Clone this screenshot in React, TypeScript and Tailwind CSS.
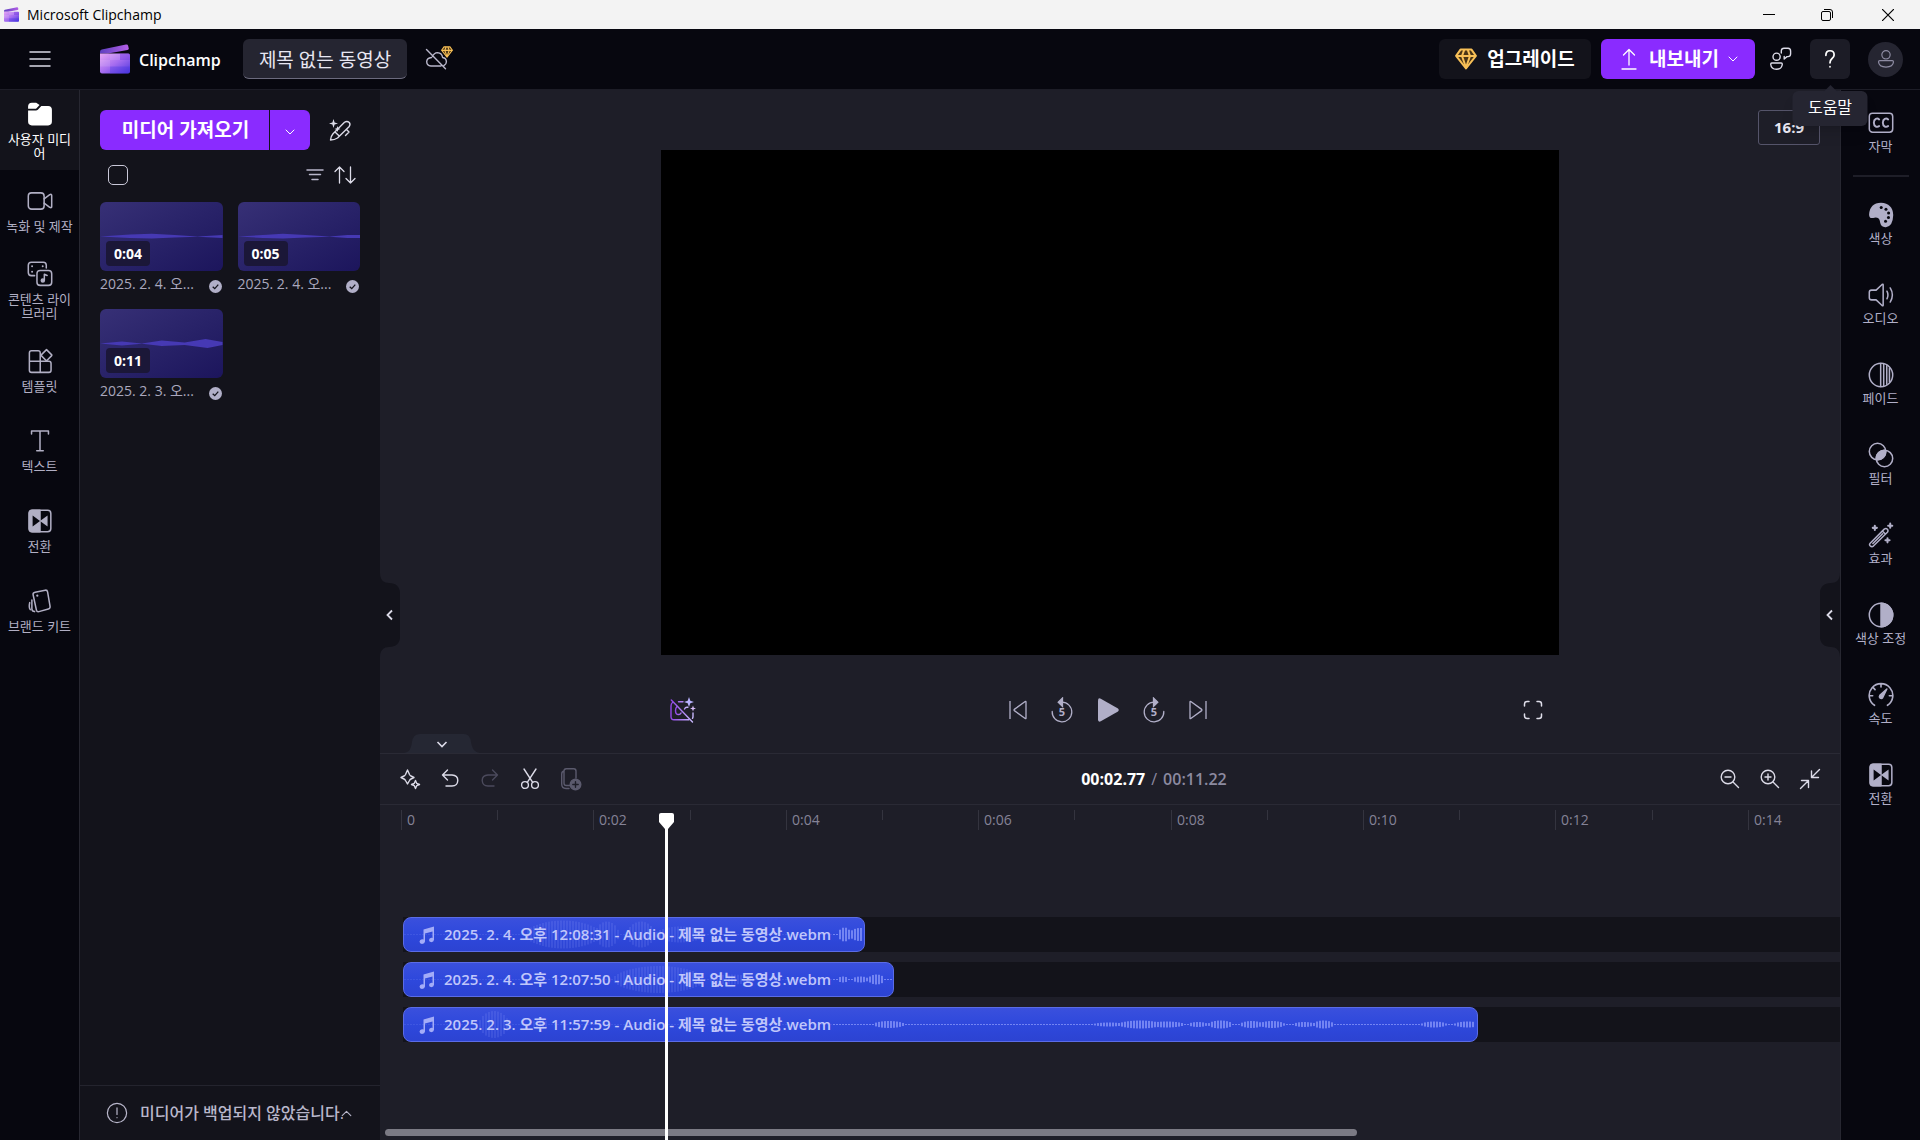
import type { ReactNode } from 'react';

type IconProps = { children: ReactNode; size?: number; className?: string; stroke?: number };

// Outline icon base, drawn on a 24 grid
function Icon({ children, size = 24, className = '', stroke = 1.4 }: IconProps) {
  return (
    <svg
      width={size}
      height={size}
      viewBox="0 0 24 24"
      fill="none"
      stroke="currentColor"
      strokeWidth={stroke}
      strokeLinecap="round"
      strokeLinejoin="round"
      aria-hidden="true"
      className={`shrink-0 ${className}`}
    >
      {children}
    </svg>
  );
}

function Logo({ size }: { size: number }) {
  return (
    <svg width={size} height={size} viewBox="0 0 30 30" aria-hidden="true" className="shrink-0">
      <defs>
        <linearGradient id={`lid${size}`} x1="0" y1="0" x2="1" y2="0">
          <stop offset="0" stopColor="#5d3fc0" />
          <stop offset="1" stopColor="#b45fe6" />
        </linearGradient>
        <linearGradient id={`body${size}`} x1="0" y1="0" x2="1" y2="1">
          <stop offset="0" stopColor="#e7a6f4" />
          <stop offset="0.5" stopColor="#a66df0" />
          <stop offset="1" stopColor="#4a35dd" />
        </linearGradient>
      </defs>
      <path d="M0 9.5V7.8Q0 6 1.8 5.5L26 0.6Q27.8 .3 28.2 2L28.7 4.2Q28.9 5.6 27.4 6L8 9.5Z" fill={`url(#lid${size})`} />
      <path d="M0 9.5H28.3Q30 9.5 30 11.2V27.5Q30 29.5 28 29.5H2Q0 29.5 0 27.5Z" fill={`url(#body${size})`} />
      <path d="M10 9.5H20V16H10Z" fill="#fff" opacity=".1" />
      <path d="M20 9.5H28.3Q30 9.5 30 11.2V16H20Z" fill="#6b35d8" opacity=".35" />
      <path d="M0 16H10V22.5H0Z" fill="#fff" opacity=".12" />
      <path d="M10 22.5H30V27.5Q30 29.5 28 29.5H10Z" fill="#4030e0" opacity=".3" />
    </svg>
  );
}

function Gem({ size }: { size: number }) {
  return (
    <svg
      width={size}
      height={size}
      viewBox="0 0 22 22"
      fill="none"
      stroke="#f8c057"
      strokeWidth="2"
      strokeLinejoin="round"
      aria-hidden="true"
      className="shrink-0"
    >
      <path d="M5.5 1.600H16.500L20.900 7.800L11 20.500L1.100 7.800Z" fill="#4a3516" />
      <path d="M1.500 8H20.500M9.200 1.800L7 8L11 19.500L15 8L12.800 1.800" />
    </svg>
  );
}

function Chevron({ d, size = 12, stroke = 2, className = '' }: { d: string; size?: number; stroke?: number; className?: string }) {
  return (
    <Icon size={size} stroke={stroke} className={className}>
      <path d={d} />
    </Icon>
  );
}

const DOWN = 'M4 8L12 16L20 8';
const UP = 'M4 16L12 8L20 16';

const icons = {
  folder: (
    <Icon size={26}>
      <path d="M1 5Q1 1.500 4.500 1.500H8.500L11.600 3.600L8.800 6.600Q8.300 7.200 7.500 7.200H1Z" fill="currentColor" stroke="none" />
      <path d="M1 8.700H8.300Q9.300 8.700 10 8L13.200 4.500H19.500Q23 4.500 23 8V19Q23 22.500 19.500 22.500H4.500Q1 22.500 1 19Z" fill="currentColor" stroke="none" />
    </Icon>
  ),
  camera: (
    <Icon size={26}>
      <rect x="1.200" y="4.500" width="14.600" height="15" rx="3" />
      <path d="M15.800 10L21 6.200Q22.800 5.200 22.800 7V17Q22.800 18.800 21 17.800L15.800 14" />
    </Icon>
  ),
  library: (
    <Icon size={26}>
      <path d="M7 13.500H4Q1.200 13.500 1.200 10.700V3.900Q1.200 1.200 4 1.200H15Q17.800 1.200 17.800 4V6.500" />
      <path d="M4.700 4.800V4.900M4.700 9.800V9.900M14.500 4.800V4.900" strokeWidth="1.800" />
      <rect x="9.200" y="8.700" width="13.600" height="13.800" rx="3" />
      <circle cx="14.600" cy="18" r="1.400" fill="currentColor" />
      <path d="M16 18V12.200L18.600 13.400" />
    </Icon>
  ),
  templates: (
    <Icon size={26}>
      <path d="M12.200 12.200V4.500Q12.200 2.500 10.200 2.500H4.200Q2.200 2.500 2.200 4.500V20.500Q2.200 22.500 4.200 22.500H20.200Q22.200 22.500 22.200 20.500V14.200Q22.200 12.200 20.200 12.200H2.200M12.200 12.200V22.500" />
      <path d="M18 1.500L22.600 6.100Q23.200 6.700 22.600 7.300L18.600 11.300Q18 11.900 17.400 11.300L13.400 7.300Q12.800 6.700 13.400 6.100Z" />
    </Icon>
  ),
  text: (
    <Icon size={26}>
      <path d="M4.200 5.500V2.700H19.800V5.500M12 2.700V21M9 21H15" />
    </Icon>
  ),
  transition: (
    <Icon size={26}>
      <rect x="2" y="2" width="20" height="20" rx="3" />
      <path d="M12 2V22H5Q2 22 2 19V5Q2 2 5 2Z" fill="currentColor" />
      <path d="M5.200 7V17L12 12Z" fill="#07070f" stroke="none" />
      <path d="M19 7V17L12 12Z" fill="currentColor" stroke="none" />
    </Icon>
  ),
  brand: (
    <Icon size={26}>
      <path d="M7.500 3.900L16.800 2Q18.600 1.700 19 3.500L21.300 17Q21.500 19 19.700 19.400L11 21.800Q9.200 22.200 8.700 20.500L5.600 6Q5.400 4.300 7.500 3.900Z" />
      <path d="M9.500 7V7.100" strokeWidth="2" />
      <path d="M4.500 11V19.500Q4.700 21.500 7 21.800M2.500 13.500Q1.500 18 3 20" />
    </Icon>
  ),
  cc: (
    <Icon size={26}>
      <rect x="1.200" y="3" width="21.600" height="17.500" rx="3" />
      <path d="M10.300 8.700Q8.900 7.500 7.200 8.200Q5.400 9.200 5.400 11.800Q5.400 14.400 7.200 15.300Q8.900 16 10.300 14.800M18.600 8.700Q17.200 7.500 15.500 8.200Q13.700 9.200 13.700 11.800Q13.700 14.400 15.500 15.300Q17.200 16 18.600 14.800" strokeWidth="1.800" />
    </Icon>
  ),
  palette: (
    <Icon size={26}>
      <path d="M1 11.500Q1.800 1 12 0.800Q22.800 1.500 23.300 12Q23 22.500 16.500 23.200Q12 23.500 11.200 19Q10.800 15 8.500 14.500Q6.500 14.200 4.800 14.700Q1 15.500 1 11.500Z" fill="currentColor" stroke="none" />
      <g fill="#07070f" stroke="none">
        <circle cx="12.200" cy="5" r="1.400" />
        <circle cx="16.600" cy="6.600" r="1.400" />
        <circle cx="19" cy="10.200" r="1.400" />
        <circle cx="18.900" cy="14.400" r="1.400" />
        <circle cx="16.200" cy="17.700" r="1.400" />
      </g>
    </Icon>
  ),
  audio: (
    <Icon size={26}>
      <path d="M14 2.800V21.200Q14 22.300 13 21.700L7.500 16.500H3.300Q1.200 16.500 1.200 14.500V9.500Q1.200 7.500 3.300 7.500H7.500L13 2.300Q14 1.700 14 2.800Z" />
      <path d="M17.500 8.500Q19.300 12 17.500 15.500M20.500 5.500Q24.500 12 20.500 18.500" />
    </Icon>
  ),
  fade: (
    <Icon size={26}>
      <circle cx="12" cy="12" r="10.800" />
      <path d="M11.700 1.500V22.500M14.500 2V22M17.300 3.500V20.500M19.800 5.500V18.500" />
    </Icon>
  ),
  filter: (
    <Icon size={26}>
      <circle cx="8.800" cy="8.800" r="7.600" />
      <circle cx="15.200" cy="15.200" r="7.600" />
      <path d="M16.300 7.700A7.600 7.600 0 0 1 7.700 16.300A7.600 7.600 0 0 1 16.300 7.700Z" fill="currentColor" />
    </Icon>
  ),
  effects: (
    <Icon size={26}>
      <path d="M2 19.600L15 6.600Q16.700 5.500 17.900 6.700Q19 7.900 17.900 9.500L5 22.200Q3.500 23.300 2 22Q.8 20.800 2 19.600ZM13.500 8.500L16 11M4.500 19.800L13.500 10.800" />
      <path d="M6.300 3.500V7.300M4.400 5.400H8.200M20.500 1.500V5.300M18.600 3.400H22.400M18 15V18.800M16.100 16.900H19.900" strokeWidth="1.900" />
    </Icon>
  ),
  adjust: (
    <Icon size={26}>
      <circle cx="12" cy="12" r="10.800" />
      <path d="M12 1.200A10.800 10.800 0 0 1 12 22.800Z" fill="currentColor" />
    </Icon>
  ),
  speed: (
    <Icon size={26}>
      <path d="M6 21.500A10.900 10.900 0 1 1 18 21.500M12 1.800V4.500M4.800 5.200L6.500 7M1.500 12.700H4.300M22.500 12.700H19.700" strokeWidth="1.500" />
      <path d="M17.400 6.500L13.600 14.300Q12.700 15.700 11.200 14.900Q9.900 13.800 10.900 12.400Z" fill="currentColor" />
    </Icon>
  ),
};

const leftTools = [
  { label: '사용자 미디어', icon: icons.folder, active: true },
  { label: '녹화 및 제작', icon: icons.camera },
  { label: '콘텐츠 라이브러리', icon: icons.library },
  { label: '템플릿', icon: icons.templates },
  { label: '텍스트', icon: icons.text },
  { label: '전환', icon: icons.transition },
  { label: '브랜드 키트', icon: icons.brand },
];

const rightTools = [
  { label: '색상', icon: icons.palette },
  { label: '오디오', icon: icons.audio },
  { label: '페이드', icon: icons.fade },
  { label: '필터', icon: icons.filter },
  { label: '효과', icon: icons.effects },
  { label: '색상 조정', icon: icons.adjust },
  { label: '속도', icon: icons.speed },
  { label: '전환', icon: icons.transition },
];

const media = [
  { name: '2025. 2. 4. 오...', length: '0:04', wave: 'M0 34.500L30 32.500L52 31.800L75 33L98 34.500L123 33V36L98 34.800L75 35.500L52 36.500L30 36Z' },
  { name: '2025. 2. 4. 오...', length: '0:05', wave: 'M0 34.500L25 33L45 31.800L68 33L92 34.500L110 33H123V36H110L92 34.800L68 35.500L45 36.500L25 36Z' },
  { name: '2025. 2. 3. 오...', length: '0:11', wave: 'M0 34.500L22 32.500L42 34.500L62 31.500L85 33.500L106 30L123 33V36L108 39L85 36L62 37L42 34.800L22 36.500Z' },
];

// Bumps are [start, end, height] in px from the clip's left edge
type Bump = [number, number, number];

const clips: { name: string; seconds: number; bumps: Bump[] }[] = [
  {
    name: '2025. 2. 4. 오후 12:08:31 - Audio - 제목 없는 동영상.webm',
    seconds: 4.8,
    bumps: [[120, 196, 28], [190, 214, 26], [222, 250, 26], [250, 300, 16], [433, 446, 14], [444, 466, 13]],
  },
  {
    name: '2025. 2. 4. 오후 12:07:50 - Audio - 제목 없는 동영상.webm',
    seconds: 5.1,
    bumps: [[208, 300, 27], [304, 350, 10], [432, 444, 6], [447, 464, 6], [463, 480, 10]],
  },
  {
    name: '2025. 2. 3. 오후 11:57:59 - Audio - 제목 없는 동영상.webm',
    seconds: 11.17,
    bumps: [
      [74, 104, 27], [126, 144, 10], [468, 500, 7], [688, 720, 4], [713, 757, 8], [743, 780, 6], [783, 803, 5], [803, 828, 8],
      [835, 858, 7], [854, 880, 7], [888, 910, 5], [908, 929, 8], [1016, 1042, 6], [1049, 1076, 6],
    ],
  },
];

const PX_PER_SECOND = 96.2;
const TEXT_END = 429;

function px(seconds: number) {
  return Math.round(seconds * PX_PER_SECOND);
}

function barHeight(x: number, bumps: Bump[]) {
  return bumps.reduce((max, [from, to, height]) => {
    if (x < from || x > to) return max;
    return Math.max(max, height * Math.sqrt(Math.sin((Math.PI * (x - from)) / (to - from))));
  }, 1);
}

function Waveform({ width, bumps }: { width: number; bumps: Bump[] }) {
  const bars = Array.from({ length: Math.floor((width - 2) / 3) }, (_, i) => i * 3);
  return (
    <svg width={width} height="33" aria-hidden="true" className="absolute top-0 left-0">
      {bars.map((x) => {
        const h = barHeight(x, bumps);
        return <rect key={x} x={x} y={16.5 - h / 2} width="2" height={h} fill="#98a4ff" opacity={x < TEXT_END ? 0.16 : 0.65} />;
      })}
    </svg>
  );
}

function TitleBar() {
  return (
    <div className="flex h-[29px] shrink-0 items-center bg-[#f3f3f3] pl-1 text-black">
      <Logo size={15} />
      <span className="flex-1 pl-2 text-sm">Microsoft Clipchamp</span>
      <button aria-label="최소화" className="flex w-[58px] justify-center">
        <svg width="12" height="12"><path d="M0 5.500H12" stroke="#000" /></svg>
      </button>
      <button aria-label="이전 크기로 복원" className="flex w-[58px] justify-center">
        <svg width="12" height="12" fill="none" stroke="#000">
          <rect x=".5" y="2.500" width="9" height="9" rx="1.500" />
          <path d="M3 .5H9Q11.500 .5 11.500 3V9" />
        </svg>
      </button>
      <button aria-label="닫기" className="flex w-16 justify-center">
        <svg width="12" height="12"><path d="M0 0L12 12M12 0L0 12" stroke="#000" strokeWidth="1.200" /></svg>
      </button>
    </div>
  );
}

function Header() {
  return (
    <header className="flex h-[61px] shrink-0 items-center border-b border-[#1d1d27] bg-[#07070f]">
      <button aria-label="메뉴" className="flex w-20 justify-center">
        <svg width="22" height="16" stroke="#dcdbe8" strokeWidth="1.500" strokeLinecap="round">
          <path d="M1 1H21M1 8H21M1 15H21" />
        </svg>
      </button>
      <div className="flex items-center gap-[9px] pl-5">
        <Logo size={30} />
        <span className="w-[84px] pt-0.5 text-base font-semibold text-white">Clipchamp</span>
      </div>
      <input
        aria-label="동영상 제목"
        defaultValue="제목 없는 동영상"
        className="ml-5 h-10 w-[164px] rounded-md border-b border-[#6b6a7d] bg-[#252531] text-center text-[19px] text-[#e8e7f2]"
      />
      <button aria-label="백업 꺼짐" className="relative ml-[18px] text-[#b9b7cb]">
        <Icon size={24}>
          <path d="M7.500 9.500Q9 5.800 12.500 5.600Q17 6 17.600 10.500Q21.300 11 21.400 14.800Q21.300 17.500 19 18.500M16 19H6Q1.800 18.600 1.700 14.800Q1.800 11 6.500 10.500M1.500 2.500L20.500 21.800" />
        </Icon>
        <span className="absolute -top-px left-4"><Gem size={12} /></span>
      </button>

      <div className="ml-auto flex items-center pr-[17px] font-bold">
        <button className="flex h-10 w-[152px] items-center justify-center gap-[10px] rounded-md bg-[#13131b] text-[19px] text-white">
          <Gem size={22} />
          업그레이드
        </button>
        <button className="ml-2.5 flex h-10 w-[154px] items-center justify-center rounded-md bg-[#8a2bff] pl-1 text-[19px] text-white">
          <svg width="16" height="22" fill="none" stroke="#fff" strokeWidth="1.300" strokeLinecap="round" strokeLinejoin="round" aria-hidden="true">
            <path d="M8 17V1.500M2.500 7L8 1.500L13.500 7M1 21H15" />
          </svg>
          <span className="pr-2 pl-3">내보내기</span>
          <Chevron d={DOWN} />
        </button>
        <button aria-label="피드백" className="ml-[13px] text-[#dcdbe8]">
          <Icon size={24}>
            <circle cx="8.600" cy="9.700" r="3.600" />
            <path d="M3.800 16H13.200Q14.300 16 14.300 17.200Q13.800 22.200 8.500 22.300Q3.200 22.200 2.700 17.200Q2.700 16 3.800 16Z" />
            <path d="M13.300 6V3.800Q13.500 1.300 16 1.300H20Q22.600 1.500 22.600 4V7Q22.400 9.600 20 9.600H19L16.200 12V9.500" />
          </Icon>
        </button>
        <div className="relative ml-[18px]">
          <button aria-label="도움말" aria-describedby="help-tip" className="flex size-10 items-center justify-center rounded-md bg-[#1c1c26] text-white">
            <Icon size={22} stroke={1.9}>
              <path d="M7.500 8Q7.500 3 12 3Q16.500 3 16.500 7.500Q16.500 9.700 14 11.700Q12 13.300 12 16.200M12 20.400V20.500" />
            </Icon>
          </button>
          <div id="help-tip" role="tooltip" className="absolute top-[52px] left-1/2 z-30 flex h-[35px] w-[75px] -translate-x-1/2 items-center justify-center rounded-md bg-[#252531] pb-1 text-base font-normal text-white shadow-lg">
            <svg width="14" height="7" className="absolute -top-1.5"><path d="M7 0L14 7H0Z" fill="#252531" /></svg>
            도움말
          </div>
        </div>
        <button aria-label="계정" className="ml-[18px] flex size-[35px] items-center justify-center rounded-full bg-[#252531] text-[#8e8ca3]">
          <Icon size={20}>
            <circle cx="12" cy="7" r="5" />
            <path d="M4.500 14H19.500Q21 14 21 15.500Q20.500 21.500 12 21.800Q3.500 21.500 3 15.500Q3 14 4.500 14Z" />
          </Icon>
        </button>
      </div>
    </header>
  );
}

function LeftRail() {
  return (
    <nav className="flex w-20 shrink-0 flex-col border-r border-[#272731] bg-[#07070f]">
      {leftTools.map((tool) => (
        <button
          key={tool.label}
          className={`flex h-20 flex-col items-center justify-center gap-[5px] px-1 text-[13px] leading-[14px] break-all ${
            tool.active ? 'bg-[#13131b] text-white' : 'text-[#b1afc4]'
          }`}
        >
          {tool.icon}
          <span>{tool.label}</span>
        </button>
      ))}
    </nav>
  );
}

function MediaPanel() {
  return (
    <aside className="relative flex w-[300px] shrink-0 flex-col bg-[#13131b]">
      <div className="flex flex-1 flex-col px-5 pt-5">
        <div className="flex items-center">
          <button className="h-10 w-[169px] rounded-l-md bg-[#8a2bff] pl-0.5 text-[19px] font-bold text-white">미디어 가져오기</button>
          <button aria-label="가져오기 옵션" className="ml-px flex h-10 w-10 items-center justify-center rounded-r-md bg-[#8a2bff] pt-1 text-white">
            <Chevron d={DOWN} />
          </button>
          <button aria-label="AI로 만들기" className="ml-[18px] text-[#dcdbe8]">
            <Icon size={24}>
              <path d="M2.500 22Q3 18 5 15.800L16.500 4.300Q19 2.500 21.300 4.500Q22.800 6.500 21 8.800L9.500 20Q6.500 22 2.500 22ZM7 14L11 17.800M18.500 11.500L21 14L17.500 17.500" />
              <path d="M5.500 1L6.600 4.400L10 5.500L6.600 6.600L5.500 10L4.400 6.600L1 5.500L4.400 4.400ZM9.500 8L10.300 10.200L12.500 11L10.300 11.800L9.500 14L8.700 11.800L6.500 11L8.700 10.200Z" fill="currentColor" stroke="none" />
            </Icon>
          </button>
        </div>

        <div className="flex items-center pt-[15px] pl-2">
          <input type="checkbox" aria-label="모두 선택" className="size-5 appearance-none rounded-[5px] border border-[#c9c8d8]" />
          <button aria-label="필터링" className="ml-auto text-[#b9b7cb]">
            <svg width="18" height="14" stroke="currentColor" strokeWidth="1.500" strokeLinecap="round">
              <path d="M1 2H17M3.500 6.500H14.500M6 11.500H12" />
            </svg>
          </button>
          <button aria-label="정렬" className="mr-1 ml-[10px] text-[#dcdbe8]">
            <svg width="22" height="18" fill="none" stroke="currentColor" strokeWidth="1.300" strokeLinecap="round" strokeLinejoin="round">
              <path d="M5.500 17V1M1 5.500L5.500 1L10 5.500M16.500 1V17M12 12.500L16.500 17L21 12.500" />
            </svg>
          </button>
        </div>

        <div className="grid grid-cols-2 gap-x-[15px] gap-y-[10px] pt-[17px]">
          {media.map((item) => (
            <div key={item.length}>
              <div className="relative h-[69px] overflow-hidden rounded-md bg-linear-to-br from-[#373076] to-[#1c155c]">
                <svg width="100%" height="69" viewBox="0 0 123 69" preserveAspectRatio="none" aria-hidden="true">
                  <path d={item.wave} fill="#4639b4" />
                </svg>
                <span className="absolute bottom-[5px] left-1.5 rounded bg-[#1b1738] px-2 text-sm leading-[25px] font-bold text-white">
                  {item.length}
                </span>
              </div>
              <div className="flex h-7 items-center pr-px">
                <span className="pb-0.5 text-sm whitespace-nowrap text-[#aaa8bd]">{item.name}</span>
                <svg width="13" height="13" viewBox="0 0 14 14" className="mt-0.5 ml-auto shrink-0" aria-hidden="true">
                  <circle cx="7" cy="7" r="7" fill="#b1afc8" />
                  <path d="M4 7.200L6.200 9.300L10 5" fill="none" stroke="#13131b" strokeWidth="1.400" />
                </svg>
              </div>
            </div>
          ))}
        </div>
      </div>

      <button className="flex h-[55px] items-center border-t border-[#24242e] pl-[26px] text-base font-medium text-[#b9b7cb]">
        <Icon size={22} stroke={1.3}>
          <circle cx="12" cy="12" r="10.500" />
          <path d="M12 6.500V13.500M12 17V17.100" />
        </Icon>
        <span className="ml-3 w-[200px] text-left whitespace-nowrap">미디어가 백업되지 않았습니다.</span>
        <Chevron d={UP} size={13} />
      </button>

      <button aria-label="미디어 패널 접기" className="absolute top-1/2 left-full z-10 -translate-y-1/2 text-[#dcdbe8]">
        <svg width="20" height="90" aria-hidden="true">
          <path d="M0 3C0 10 4 13 9 13C16 13 20 17 20 23V67C20 73 16 77 9 77C4 77 0 80 0 87Z" fill="#13131b" />
          <path d="M12 40.500L7.500 45L12 49.500" fill="none" stroke="currentColor" strokeWidth="1.800" />
        </svg>
      </button>
    </aside>
  );
}

function SkipFive({ forward = false }: { forward?: boolean }) {
  return (
    <svg width="24" height="26" viewBox="0 0 24 26" aria-hidden="true">
      <g transform={forward ? 'matrix(-1 0 0 1 24 0)' : undefined} fill="none" stroke="currentColor" strokeWidth="1.300" strokeLinecap="round">
        <path d="M2.200 14.500A9.800 9.800 0 1 0 12 5.200" />
        <path d="M12.500 1V9.400L8.200 5.200Z" fill="currentColor" />
      </g>
      <text x="12" y="19" textAnchor="middle" fontSize="11" fontWeight="700" fill="currentColor">5</text>
    </svg>
  );
}

function Stage() {
  return (
    <section className="relative flex justify-center pt-[60px]">
      <button className="absolute top-5 right-5 h-[35px] w-[62px] rounded-[3px] border border-[#55546a] text-[15px] font-bold text-[#e8e7f2]">16:9</button>
      <div className="w-[61.5%]">
        <div className="aspect-video bg-black" />
        <div className="grid h-[98px] grid-cols-3 items-center px-[9px] pt-3 text-[#b1afc8]">
          <button aria-label="자동 캡션" className="justify-self-start">
            <svg width="26" height="26" viewBox="0 0 26 26" fill="none" strokeWidth="1.400" strokeLinecap="round" aria-hidden="true">
              <defs>
                <linearGradient id="caption" x1="0" y1="0" x2="1" y2="0">
                  <stop offset="0" stopColor="#9247e8" />
                  <stop offset="1" stopColor="#c7b8fb" />
                </linearGradient>
              </defs>
              <g stroke="url(#caption)">
                <path d="M2.500 5.500Q1 6.500 1 9V19.500Q1 22.800 4 22.800H19M8.500 4.800H13M23 16V19.500Q23 20.500 22.500 21.300" />
                <path d="M7 9.500Q5.500 11 5.500 13.500Q5.500 18 9 17.500Q10.500 17.300 11 16M14.500 12Q15.500 9.700 17.800 10.300" />
                <path d="M1.300 3L22.500 25" />
              </g>
              <path d="M19 0L20.300 3.700L24 5L20.300 6.300L19 10L17.700 6.300L14 5L17.700 3.700Z" fill="#b9b2ff" />
              <path d="M23 8.500L23.800 10.700L26 11.500L23.800 12.300L23 14.500L22.200 12.300L20 11.500L22.200 10.700Z" fill="#d9bdf8" />
            </svg>
          </button>
          <div className="flex items-center justify-center gap-[22px] pr-1">
            <button aria-label="처음으로">
              <svg width="19" height="20" fill="none" stroke="currentColor" strokeWidth="1.300" strokeLinejoin="round">
                <path d="M1 1V19M17 1.800V18.200Q17 19 16.200 18.500L5.300 10.600Q4.700 10 5.300 9.400L16.200 1.500Q17 1 17 1.800Z" />
              </svg>
            </button>
            <button aria-label="5초 뒤로"><SkipFive /></button>
            <button aria-label="재생">
              <svg width="24" height="26" fill="currentColor">
                <path d="M2 3.500Q2 .5 4.800 1.700L22 11.500Q23.800 13 22 14.500L4.800 24.300Q2 25.500 2 22.500Z" />
              </svg>
            </button>
            <button aria-label="5초 앞으로"><SkipFive forward /></button>
            <button aria-label="끝으로">
              <svg width="19" height="20" fill="none" stroke="currentColor" strokeWidth="1.300" strokeLinejoin="round">
                <path d="M18 1V19M2 1.800V18.200Q2 19 2.800 18.500L13.700 10.600Q14.300 10 13.700 9.400L2.800 1.500Q2 1 2 1.800Z" />
              </svg>
            </button>
          </div>
          <button aria-label="전체 화면" className="mr-[7px] justify-self-end text-[#e0dfea]">
            <svg width="20" height="20" fill="none" stroke="currentColor" strokeWidth="1.500" strokeLinecap="round">
              <path d="M1.500 6V4Q1.500 1.500 4 1.500H6M14 1.500H16Q18.500 1.500 18.500 4V6M18.500 14V16Q18.500 18.500 16 18.500H14M6 18.500H4Q1.500 18.500 1.500 16V14" />
            </svg>
          </button>
        </div>
      </div>

      <button aria-label="속성 패널 열기" className="absolute top-[525px] right-0 -translate-y-1/2 text-[#dcdbe8]">
        <svg width="20" height="90" aria-hidden="true">
          <path d="M20 3C20 10 16 13 11 13C4 13 0 17 0 23V67C0 73 4 77 11 77C16 77 20 80 20 87Z" fill="#13131b" />
          <path d="M12 40.500L7.500 45L12 49.500" fill="none" stroke="currentColor" strokeWidth="1.800" />
        </svg>
      </button>
      <button aria-label="타임라인 접기" className="absolute bottom-0 left-6 text-[#dcdbe8]">
        <svg width="76" height="20" aria-hidden="true">
          <path d="M0 20C6 19 7 15 8 9Q9 1 16 1H60Q66 1 67 9C68 15 70 19 76 20Z" fill="#252733" />
          <path d="M33.500 9L38 13.500L42.500 9" fill="none" stroke="currentColor" strokeWidth="1.600" />
        </svg>
      </button>
    </section>
  );
}

function TimelineToolbar() {
  return (
    <div className="flex h-[52px] shrink-0 items-center justify-between border-y border-[#2a2a35] px-[18px] text-[#dcdbe8]">
      <div className="flex items-center gap-4">
        <button aria-label="AI 제안">
          <Icon>
            <path d="M9.500 3L11.500 7.500Q12 8.500 13 9L16 10.500L13 12Q12 12.500 11.500 13.500L9.500 17L7.500 13.500Q7 12.500 6 12L3 10.500L6 9Q7 8.500 7.500 7.500Z" />
            <path d="M17.500 13.500L18.700 16.300L21.500 17.500L18.700 18.700L17.500 21.500L16.300 18.700L13.500 17.500L16.300 16.300Z" />
          </Icon>
        </button>
        <button aria-label="실행 취소">
          <Icon>
            <path d="M9.500 3L4.500 8L9.500 13M4.500 8H14Q19.800 8.300 19.800 13.500Q19.500 19 14 19H8" />
          </Icon>
        </button>
        <button aria-label="다시 실행" className="text-[#4b4a5c]">
          <Icon>
            <path d="M14.500 3L19.500 8L14.500 13M19.500 8H10Q4.200 8.300 4.200 13.500Q4.500 19 10 19H16" />
          </Icon>
        </button>
        <button aria-label="분할">
          <Icon>
            <path d="M6 2L14.700 15.300M18 2L9.300 15.300" />
            <circle cx="7" cy="18" r="3.400" />
            <circle cx="17" cy="18" r="3.400" />
          </Icon>
        </button>
        <button aria-label="복제" className="text-[#5b5a6d]">
          <Icon>
            <path d="M12 18.500H8.300Q6 18.500 6 16.300V4Q6 1.800 8.300 1.800H15.700Q18 1.800 18 4V11M6 4Q3.700 4.500 3.700 7V17Q3.700 21.500 8 21.500H11" />
            <circle cx="17.500" cy="17.500" r="5.300" fill="currentColor" />
            <path d="M17.500 14.800V20.200M14.800 17.500H20.200" stroke="#1e1e28" />
          </Icon>
        </button>
      </div>
      <p className="flex gap-1.5 pl-2 text-base text-[#8c8aa0]">
        <span className="font-bold text-white">00:02.77</span>
        <span>/</span>
        <span className="font-semibold">00:11.22</span>
      </p>
      <div className="flex items-center gap-4">
        <button aria-label="축소">
          <Icon>
            <circle cx="10" cy="10" r="6.800" />
            <path d="M15 15L20.500 20.500M7 10H13" />
          </Icon>
        </button>
        <button aria-label="확대">
          <Icon>
            <circle cx="10" cy="10" r="6.800" />
            <path d="M15 15L20.500 20.500M7 10H13M10 7V13" />
          </Icon>
        </button>
        <button aria-label="창에 맞춤">
          <Icon>
            <path d="M21.500 2.500L13.500 10.500M13.500 4V10.500H20.500M2.500 21.500L10.500 13.500M3.500 13.500H10.500V20.500" />
          </Icon>
        </button>
      </div>
    </div>
  );
}

function Timeline() {
  return (
    <section className="flex flex-1 flex-col">
      <TimelineToolbar />
      <div className="relative flex-1 overflow-hidden pt-[5px] pl-[21px]">
        {/* Ruler: a label every two seconds, a short tick between */}
        <div className="flex h-5 text-sm leading-5 font-medium text-[#858397]">
          {Array.from({ length: 15 }, (_, s) => (
            <div key={s} className="shrink-0" style={{ width: px(s + 1) - px(s) }}>
              {s % 2 === 0 ? (
                <div className="h-5 border-l border-[#34343f] pl-[5px]">{s === 0 ? '0' : `0:${String(s).padStart(2, '0')}`}</div>
              ) : (
                <div className="h-2.5 border-l border-[#34343f]" />
              )}
            </div>
          ))}
        </div>

        <div className="flex flex-col gap-[10px] pt-[87px] pl-0.5">
          {clips.map((clip) => (
            <div key={clip.name} className="h-[35px] bg-[#13131a]">
              <div
                className="relative flex h-full items-center gap-2.5 overflow-hidden rounded-lg border border-[#5b6ce6] bg-linear-to-b from-[#3a50dd] via-[#2e48dc] to-[#2c43d2] pl-[15px] whitespace-nowrap text-[#c0c6fb]"
                style={{ width: px(clip.seconds) }}
              >
                <Waveform width={px(clip.seconds)} bumps={clip.bumps} />
                <svg width="15" height="18" viewBox="0 0 15 18" fill="currentColor" aria-hidden="true" className="relative shrink-0 text-[#a3acf8]">
                  <path d="M4.500 3.500L15 .5V13.800Q14.800 16 12.300 16.200Q10 16 10 14Q10.200 12 12.300 11.800Q13 11.700 13.500 12V5.500L6 7.600V15.500Q5.800 17.800 3 18Q.5 17.800 .5 15.600Q.8 13.500 3 13.300Q4 13.200 4.500 13.600Z" />
                </svg>
                <span className="relative text-[15px] font-semibold">{clip.name}</span>
              </div>
            </div>
          ))}
        </div>

        <div className="absolute bottom-1 left-[5px] h-[7px] w-[66.6%] rounded-full bg-[#7b7a84]" />

        {/* Playhead */}
        <div className="absolute top-2 bottom-0 flex w-[15px] flex-col items-center" style={{ left: 21 + px(2.77) - 8 }}>
          <svg width="15" height="16" className="shrink-0" aria-hidden="true">
            <path d="M0 2Q0 0 2 0H13Q15 0 15 2V9L9 16H6L0 9Z" fill="#fff" />
          </svg>
          <div className="w-[3px] flex-1 bg-white" />
        </div>
      </div>
    </section>
  );
}

function RightRail() {
  const item = 'flex h-20 w-full flex-col items-center justify-center gap-[3px] text-[13px] leading-[14px]';
  return (
    <nav className="flex w-20 shrink-0 flex-col items-center border-l border-[#272731] bg-[#07070f] pt-px text-[#b1afc8]">
      <button className={item}>
        {icons.cc}
        자막
      </button>
      <div className="mt-1 mb-1.5 h-0.5 w-14 shrink-0 bg-[#1e1e28]" />
      {rightTools.map((tool) => (
        <button key={tool.label} className={item}>
          {tool.icon}
          {tool.label}
        </button>
      ))}
    </nav>
  );
}

export default function App() {
  return (
    <div className="flex h-screen flex-col overflow-hidden bg-[#1e1e28] font-['Open_Sans','Noto_Sans_CJK_KR',sans-serif]">
      <TitleBar />
      <Header />
      <div className="flex min-h-0 flex-1">
        <LeftRail />
        <MediaPanel />
        <main className="flex min-w-0 flex-1 flex-col">
          <Stage />
          <Timeline />
        </main>
        <RightRail />
      </div>
    </div>
  );
}
